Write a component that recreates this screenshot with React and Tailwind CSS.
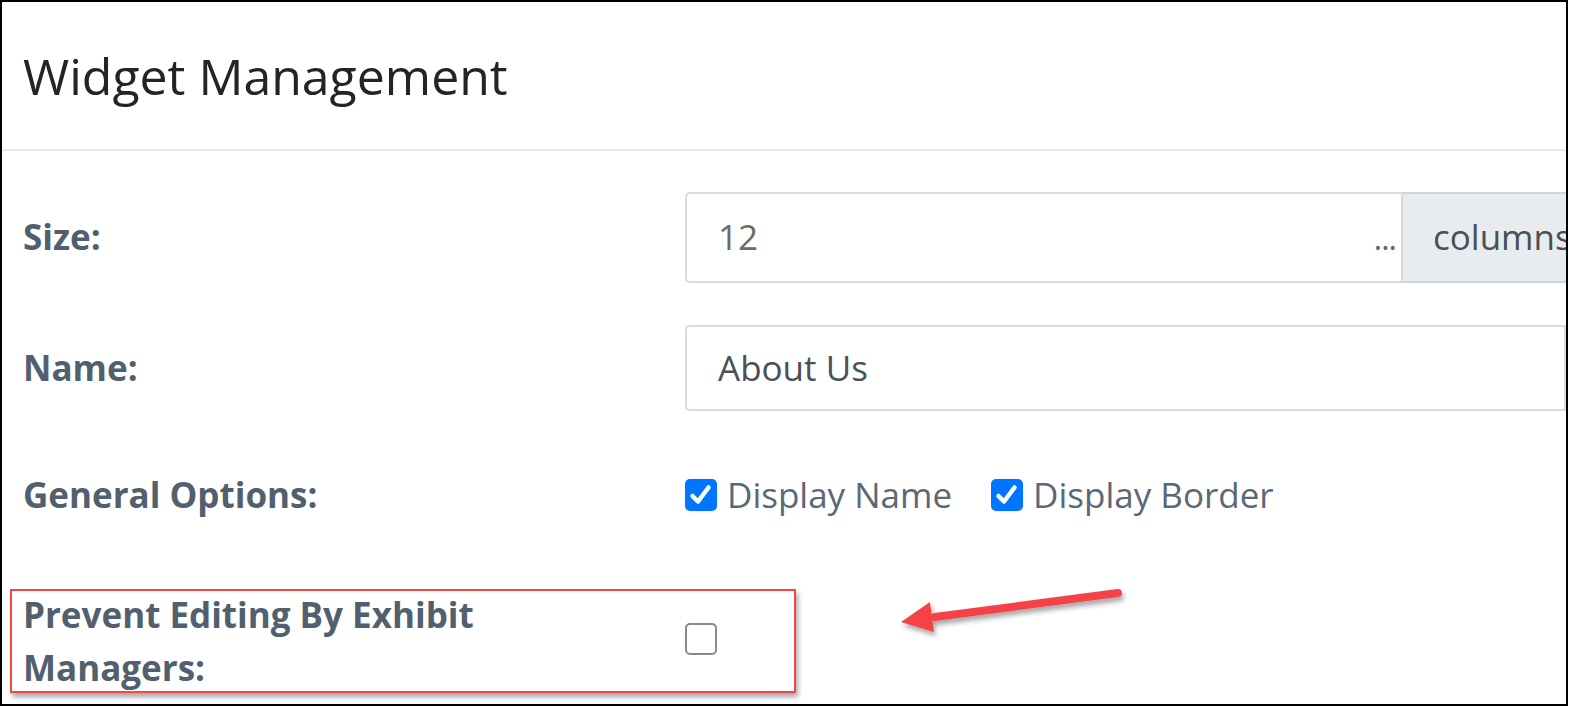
export default function App() {
  const font = { fontFamily: '"Open Sans", "Noto Sans", sans-serif' };
  return (
    <div className="relative w-[1568px] h-[706px] overflow-hidden border-2 border-black bg-white" style={font}>
      <div className="h-[149px] border-b-2 border-[#e7ebee] pl-[21px] pt-[39px]">
        <h1 className="text-[50px] leading-[70px] font-normal text-[#212529] whitespace-nowrap">Widget Management</h1>
      </div>
      <div className="pl-[21px]">
        {/* Size */}
        <div className="flex items-center mt-[41px]">
          <div className="w-[662px] shrink-0 text-[35px] font-bold text-[#515f6e]">Size:</div>
          <div className="flex h-[91px] grow">
            <div className="relative w-[718px] shrink-0 rounded-l-[5px] border-2 border-[#dadada] pl-[31px] flex items-center text-[35px] text-[#6b6b6b]">
              12
              <span className="absolute right-[5px] bottom-[27px] text-[32px] text-[#666] leading-none tracking-[-1px]">...</span>
            </div>
            <div className="grow border-2 border-l-0 border-[#ced4da] bg-[#e9ecef] pl-[30px] flex items-center text-[35px] text-[#495057] whitespace-nowrap">columns</div>
          </div>
        </div>
        {/* Name */}
        <div className="flex items-center mt-[42px]">
          <div className="w-[662px] shrink-0 text-[35px] font-bold text-[#515f6e]">Name:</div>
          <div className="h-[86px] grow rounded-l-[5px] border-2 border-[#dadada] pl-[31px] flex items-center text-[35px] text-[#495057] whitespace-nowrap">About Us</div>
        </div>
        {/* General Options */}
        <div className="flex items-center mt-[58px]">
          <div className="w-[662px] shrink-0 text-[35px] font-bold text-[#515f6e]">General Options:</div>
          <div className="flex items-center text-[35px] text-[#5a6878] whitespace-nowrap">
            <Checked />
            <span className="ml-[10px]">Display Name</span>
            <span className="ml-[39px] flex"><Checked /></span>
            <span className="ml-[10px]">Display Border</span>
          </div>
        </div>
      </div>
      {/* Prevent editing row with annotation box */}
      <div className="ml-[8px] mt-[67px] w-[786px] h-[104px] border-2 border-[#f04848] shadow-[2px_4px_5px_rgba(0,0,0,0.35)] flex items-center pl-[11px]">
        <div className="w-[662px] shrink-0 text-[35px] leading-[53px] font-bold text-[#515f6e]">Prevent Editing By Exhibit<br />Managers:</div>
        <div className="w-[32px] h-[32px] -mt-[4px] rounded-[5px] border-2 border-[#8a8a8a] bg-white" />
      </div>
      <svg className="absolute left-[888px] top-[578px]" width="250" height="60" viewBox="0 0 250 60">
        <defs>
          <filter id="sh" x="-20%" y="-50%" width="140%" height="200%">
            <feDropShadow dx="2" dy="4" stdDeviation="2.5" floodColor="#000" floodOpacity="0.35" />
          </filter>
        </defs>
        <g filter="url(#sh)">
          <line x1="228" y1="13" x2="45" y2="37" stroke="#f44347" strokeWidth="8" strokeLinecap="round" />
          <polygon points="11,42 40,22 44,52" fill="#f44347" />
        </g>
      </svg>
    </div>
  );
}

function Checked() {
  return (
    <span className="inline-flex w-[32px] h-[32px] rounded-[5px] bg-[#0075ff] items-center justify-center">
      <svg width="26" height="26" viewBox="0 0 26 26">
        <path d="M4.5 14 L10 19.5 L20.5 5.5" fill="none" stroke="#fff" strokeWidth="4.5" strokeLinecap="round" strokeLinejoin="round" />
      </svg>
    </span>
  );
}
